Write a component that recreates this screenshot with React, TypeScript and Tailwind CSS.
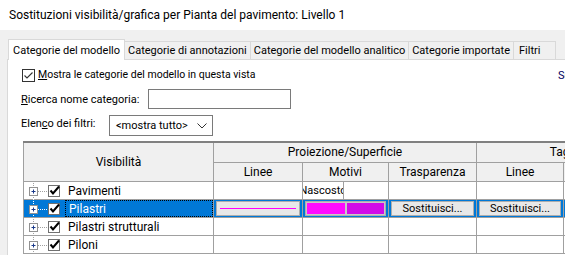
import React from "react";

const font = "font-['Segoe_UI',Roboto,'Noto_Sans',sans-serif]";

const Check = ({ thin }: { thin?: boolean }) =>
  thin ? (
    <svg width="13" height="13" viewBox="0 0 13 13" className="shrink-0">
      <rect x="0.5" y="0.5" width="12" height="12" fill="#fff" stroke="#333" />
      <path d="M2.5 6.5 L5 9 L10.5 3.5" fill="none" stroke="#333" strokeWidth="1.1" />
    </svg>
  ) : (
    <svg width="13" height="13" viewBox="0 0 13 13" className="shrink-0">
      <rect x="0.5" y="1.5" width="11" height="11" fill="#fff" stroke="#707070" />
      <path d="M2.5 6.5 L5 9.5 L11 2.5" fill="none" stroke="#000" strokeWidth="2" />
    </svg>
  );

const Tree = ({ sel }: { sel?: boolean }) => {
  const line = sel ? "#ffffff" : "#a0a0a0";
  return (
    <svg width="24" height="18" viewBox="0 0 24 18" className="shrink-0">
      <line x1="9.5" y1="0" x2="9.5" y2="18" stroke={line} strokeDasharray="1 1" />
      <line x1="14" y1="10.5" x2="24" y2="10.5" stroke={line} strokeDasharray="1 1" />
      <rect x="5.5" y="6.5" width="8" height="8" fill="#fff" stroke="#919191" />
      <path d="M7.5 10.5 H11.5 M9.5 8.5 V12.5" stroke="#1b3a8a" />
    </svg>
  );
};

const tabs = [
  "Categorie di annotazioni",
  "Categorie del modello analitico",
  "Categorie importate",
];

const rows = ["Pavimenti", "Pilastri", "Pilastri strutturali", "Piloni"];

const cell = "border border-[#a0a0a0] p-0 h-[18px]";

const App = () => {
  return (
    <div
      className={`${font} w-[565px] h-[255px] overflow-hidden bg-[#f0f0f0] text-[11px] text-black leading-none whitespace-nowrap`}
    >
      <div className="h-[30px] bg-white flex items-center pl-[9px] text-[12px]">
        Sostituzioni visibilità/grafica per Pianta del pavimento: Livello 1
      </div>

      <div className="flex items-end h-[21px] mt-[8px] pl-[8px]">
        <div className="h-[21px] bg-white border border-b-0 border-[#d9d9d9] px-[4px] flex items-center -mb-px relative z-10 shrink-0">
          Categorie del modello
        </div>
        {tabs.map((t) => (
          <div
            key={t}
            className="h-[18px] border border-l-0 border-b-0 border-[#d9d9d9] px-[3px] flex items-center shrink-0"
          >
            {t}
          </div>
        ))}
        <div className="h-[18px] w-[42px] border border-l-0 border-b-0 border-[#d9d9d9] px-[5px] flex items-center shrink-0">
          Filtri
        </div>
      </div>

      <div className="ml-[7px] w-[700px] h-[200px] bg-white border-l border-t border-[#d9d9d9] flex flex-col pl-[14px] pt-[8px]">
        <div className="flex items-center h-[14px]">
          <div className="w-[536px] flex items-center gap-[3px] shrink-0">
            <Check thin />
            <span className="text-[10.5px]">
              <u>M</u>ostra le categorie del modello in questa vista
            </span>
          </div>
          <span className="text-[#000060]">Sostituisci</span>
        </div>

        <div className="flex items-center h-[20px] mt-[7px]">
          <span className="w-[127px] -ml-px shrink-0">
            <u>R</u>icerca nome categoria:
          </span>
          <div className="w-[143px] h-[20px] border border-[#7a7a7a] bg-white shrink-0" />
        </div>

        <div className="flex items-center h-[21px] mt-[6px]">
          <span className="w-[88px] -ml-px -mt-[4px] shrink-0">
            Elen<u>c</u>o dei filtri:
          </span>
          <div className="w-[104px] h-[21px] border border-[#7a7a7a] bg-white flex items-center justify-between pl-[6px] pr-[5px] shrink-0">
            <span>&lt;mostra tutto&gt;</span>
            <svg width="10" height="6" viewBox="0 0 10 6">
              <path d="M0.5 0.5 L5 5 L9.5 0.5" fill="none" stroke="#333" />
            </svg>
          </div>
        </div>

        <table className="mt-[5px] ml-px table-fixed border-collapse border-t-2 border-l border-[#808080] w-[632px] text-[12px]">
          <colgroup>
            <col className="w-[190px]" />
            <col className="w-[89px]" />
            <col className="w-[86px]" />
            <col className="w-[88px]" />
            <col className="w-[87px]" />
            <col className="w-[92px]" />
          </colgroup>
          <thead className="bg-[#f0f0f0]">
            <tr>
              <th rowSpan={2} className="border border-[#a0a0a0] font-normal">
                Visibilità
              </th>
              <th colSpan={3} className="border border-[#a0a0a0] font-normal h-[20px]">
                Proiezione/Superficie
              </th>
              <th colSpan={2} className="border border-[#a0a0a0] font-normal">
                Taglio
              </th>
            </tr>
            <tr>
              {["Linee", "Motivi", "Trasparenza", "Linee", "Motivi"].map((h, i) => (
                <th key={i} className="border border-[#a0a0a0] font-normal h-[19px]">
                  {h}
                </th>
              ))}
            </tr>
          </thead>
          <tbody>
            {rows.map((r, i) => {
              const sel = i === 1;
              return (
                <tr key={r} className={sel ? "bg-[#0078d7]" : "bg-white"}>
                  <td className={cell}>
                    <div className="flex items-center h-[17px]">
                      <Tree sel={sel} />
                      <Check />
                      <span
                        className={`ml-[4px] h-[17px] flex-1 flex items-center pl-[3px] pt-[2px] ${
                          sel ? "text-white border border-dotted border-black" : ""
                        }`}
                      >
                        {r}
                      </span>
                    </div>
                  </td>
                  {sel ? (
                    <>
                      <td className={`${cell} px-[2px] py-[1px]`}>
                        <div className="h-[15px] bg-[#e8e8e8] border border-[#adadad] flex items-center px-[3px]">
                          <div className="h-px w-full bg-[#ff00ff]" />
                        </div>
                      </td>
                      <td className={`${cell} px-[2px] py-[1px]`}>
                        <div className="h-[15px] bg-[#c8c8c8] border border-[#adadad] flex gap-[2px] p-[1px]">
                          <div className="flex-1 bg-[#ff0aff]" />
                          <div className="flex-1 bg-[#d10ae8]" />
                        </div>
                      </td>
                      {[0, 1].map((k) => (
                        <td key={k} className={`${cell} px-[2px] py-[1px]`}>
                          <div className="h-[15px] bg-[#e8e8e8] border border-[#adadad] flex items-center justify-center text-[11px]">
                            Sostituisci...
                          </div>
                        </td>
                      ))}
                      <td className={`${cell} px-[2px] py-[1px]`}>
                        <div className="h-[15px] bg-[#e8e8e8] border border-[#adadad]" />
                      </td>
                    </>
                  ) : (
                    <>
                      <td className={cell} />
                      <td className={cell}>
                        {i === 0 && (
                          <div className="flex h-[17px]">
                            <div className="w-[41px] border-r border-[#a0a0a0] flex items-center justify-center overflow-hidden text-[11px]">
                              Nascosto
                            </div>
                          </div>
                        )}
                      </td>
                      <td className={cell} />
                      <td className={cell} />
                      <td className={cell} />
                    </>
                  )}
                </tr>
              );
            })}
          </tbody>
        </table>
      </div>
    </div>
  );
};

export default App;
